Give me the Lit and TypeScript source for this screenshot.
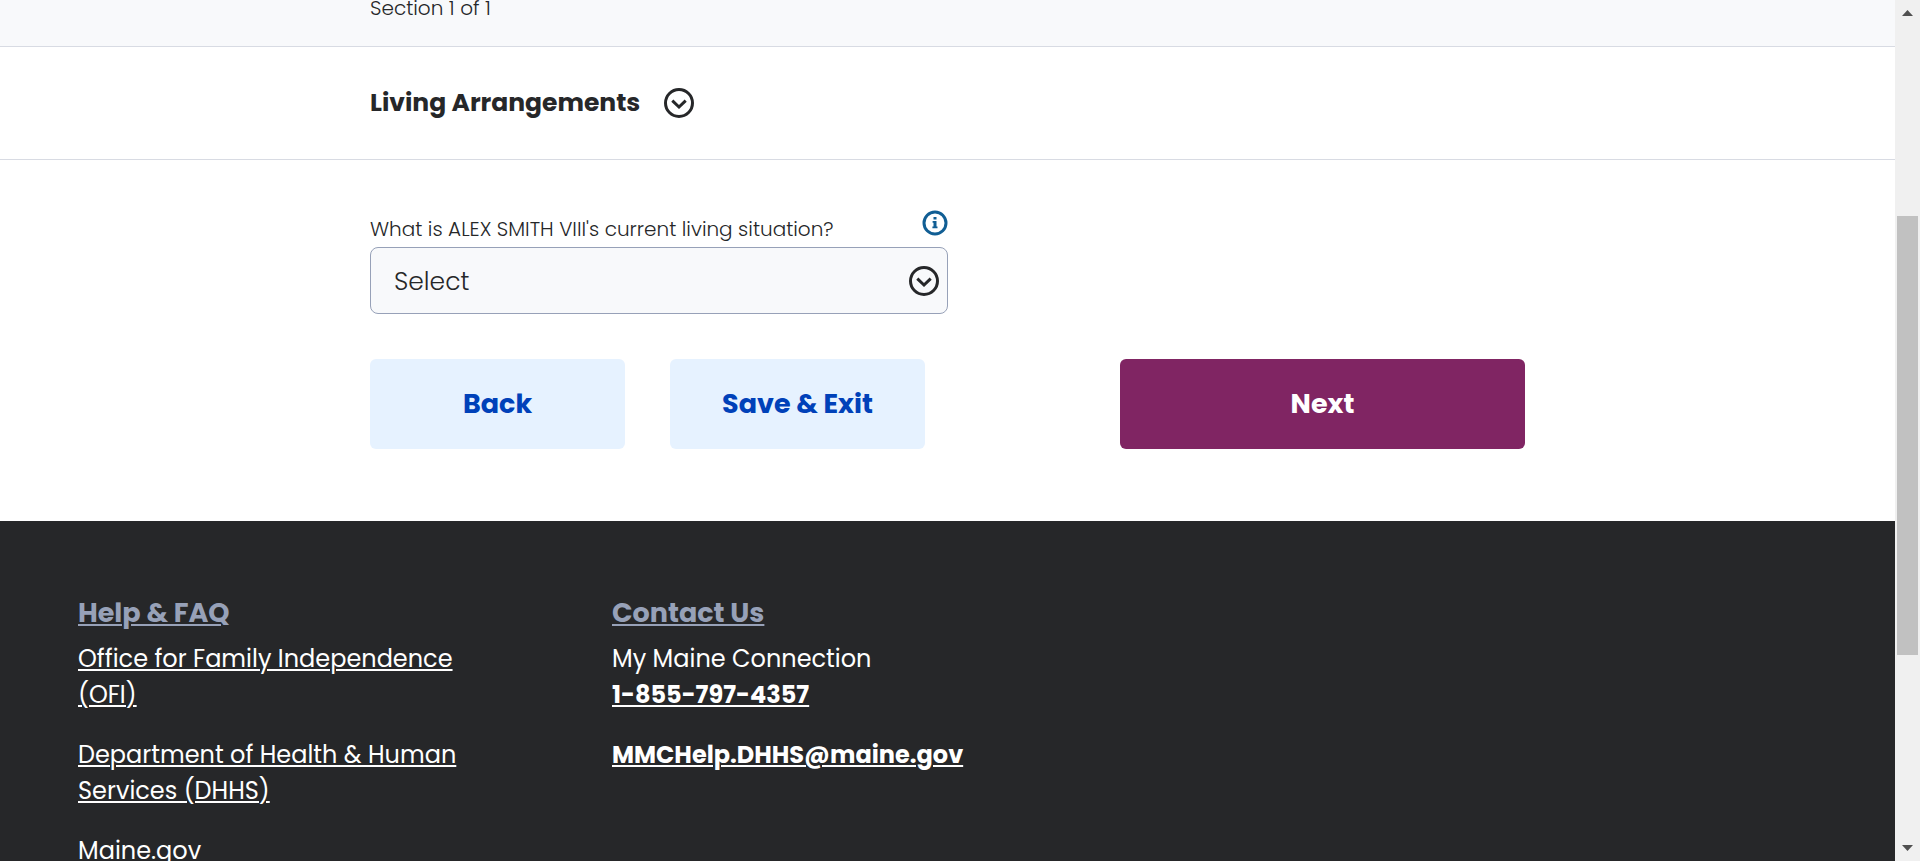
import { LitElement, html, css, svg } from "lit";
import { customElement } from "lit/decorators.js";

const chevron = () => svg`
  <circle cx="15" cy="15" r="13.5"></circle>
  <path d="M8.3 12.6 L15 19 L21.7 12.6"></path>`;

@customElement("page-scrollbar")
class PageScrollbar extends LitElement {
  static styles = css`
    :host {
      display: grid;
      grid-template-rows: 200fr 439fr 206fr;
      background: #f0f0f0;
      padding: 16px 2px 0;
      box-sizing: border-box;
    }
    .arrow {
      display: block;
      width: 11px;
      height: 6px;
      margin: -6px auto 0;
      fill: #505050;
    }
    .thumb {
      background: #c1c1c1;
    }
    .down {
      align-self: end;
      margin: 0 auto 10px;
    }
  `;
  render() {
    return html`
      <svg class="arrow" viewBox="0 0 11 6" aria-hidden="true"><path d="M5.5 0 L11 6 H0 Z" /></svg>
      <div class="thumb"></div>
      <svg class="arrow down" viewBox="0 0 11 6" aria-hidden="true"><path d="M0 0 H11 L5.5 6 Z" /></svg>
    `;
  }
}

@customElement("site-footer")
class SiteFooter extends LitElement {
  static styles = css`
    :host {
      display: block;
      background: #262729;
      color: #fff;
      padding: 72px 78px;
      font-size: 24px;
      line-height: 36px;
    }
    .columns {
      display: grid;
      grid-template-columns: 400px 400px;
      column-gap: 134px;
    }
    h2 {
      margin: 0 0 8px;
      font-size: 27px;
      line-height: 40px;
      font-weight: 700;
    }
    h2 a {
      color: #97a1b8;
    }
    p {
      margin: 0 0 24px;
    }
    a {
      color: #fff;
      text-decoration-thickness: 2px;
      text-underline-offset: 2px;
    }
    .strong {
      font-weight: 700;
    }
  `;
  render() {
    return html`
      <div class="columns">
        <section>
          <h2><a href="#help">Help &amp; FAQ</a></h2>
          <p><a href="#ofi">Office for Family Independence (OFI)</a></p>
          <p><a href="#dhhs">Department of Health &amp; Human Services (DHHS)</a></p>
          <p><a href="#maine">Maine.gov</a></p>
        </section>
        <section>
          <h2><a href="#contact">Contact Us</a></h2>
          <p>My Maine Connection<br /><a class="strong" href="tel:18557974357">1-855-797-4357</a></p>
          <p><a class="strong" href="mailto:MMCHelp.DHHS@maine.gov">MMCHelp.DHHS@maine.gov</a></p>
        </section>
      </div>
    `;
  }
}

@customElement("app-root")
class AppRoot extends LitElement {
  static styles = css`
    :host {
      display: grid;
      grid-template-columns: minmax(0, 1fr) 25px;
      height: 100vh;
      overflow: hidden;
      background: #fff;
      color: #262729;
      font-family: Poppins, Inter, "Open Sans", sans-serif;
      font-size: 20px;
      line-height: 30px;
    }
    .page {
      overflow: hidden;
      min-height: 0;
    }
    .wrap {
      max-width: 1155px;
      margin: 0 auto;
    }
    .progress {
      background: #f8f9fb;
      border-bottom: 1px solid #d8dbe3;
      font-weight: 300;
      line-height: 16px;
      padding-bottom: 30px;
    }
    .title {
      border-bottom: 1px solid #d8dbe3;
      padding: 38px 0;
    }
    .title .wrap {
      display: flex;
      align-items: center;
      gap: 24px;
    }
    h1 {
      margin: 0;
      font-size: 25px;
      line-height: 36px;
      font-weight: 700;
    }
    button {
      font: inherit;
      border: 0;
      padding: 0;
      cursor: pointer;
    }
    .icon-button {
      display: flex;
      background: none;
    }
    .chevron {
      display: block;
      width: 30px;
      height: 30px;
      fill: none;
      stroke: #262729;
      stroke-width: 3;
    }
    .form {
      padding: 50px 0 72px;
    }
    .field {
      width: 50%;
      font-weight: 300;
    }
    .label-row {
      display: flex;
      justify-content: space-between;
      align-items: flex-start;
    }
    label {
      padding-top: 4px;
      line-height: 30px;
      padding-bottom: 3px;
    }
    .info {
      display: block;
      width: 26px;
      height: 26px;
    }
    .select-box {
      position: relative;
    }
    select {
      display: block;
      appearance: none;
      width: 100%;
      height: 67px;
      padding: 2px 56px 0 23px;
      border: 1px solid #97a1b8;
      border-radius: 8px;
      background: #f8f9fb;
      color: inherit;
      font: inherit;
      font-size: 25px;
    }
    .select-box .chevron {
      position: absolute;
      right: 9px;
      top: 19px;
      pointer-events: none;
    }
    .actions {
      display: flex;
      gap: 45px;
      margin-top: 45px;
    }
    .action {
      width: 255px;
      height: 90px;
      border-radius: 6px;
      font-size: 27px;
      font-weight: 700;
      background: #e6f2ff;
      color: #0041b9;
    }
    .next {
      width: 405px;
      margin-left: auto;
      background: #802563;
      color: #fff;
    }
  `;
  render() {
    return html`
      <div class="page">
        <div class="progress"><div class="wrap">Section 1 of 1</div></div>
        <div class="title">
          <div class="wrap">
            <h1>Living Arrangements</h1>
            <button class="icon-button" aria-label="Expand Living Arrangements">
              <svg class="chevron" viewBox="0 0 30 30">${chevron()}</svg>
            </button>
          </div>
        </div>
        <form class="form wrap" @submit=${(e: Event) => e.preventDefault()}>
          <div class="field">
            <div class="label-row">
              <label for="living">What is ALEX SMITH VIII's current living situation?</label>
              <button class="icon-button" type="button" aria-label="More information">
                <svg class="info" viewBox="0 0 26 26">
                  <circle cx="13" cy="13" r="11" fill="none" stroke="#115e94" stroke-width="3" />
                  <path fill="#115e94" d="M11.5 7h3v2.6h-3zM10.6 11h3.9v5.4h1v1.8h-5.1v-1.8h1.1v-3.6h-.9z" />
                </svg>
              </button>
            </div>
            <div class="select-box">
              <select id="living"><option>Select</option></select>
              <svg class="chevron" viewBox="0 0 30 30" aria-hidden="true">${chevron()}</svg>
            </div>
          </div>
          <div class="actions">
            <button class="action" type="button">Back</button>
            <button class="action" type="button">Save &amp; Exit</button>
            <button class="action next" type="submit">Next</button>
          </div>
        </form>
        <site-footer></site-footer>
      </div>
      <page-scrollbar></page-scrollbar>
    `;
  }
}
